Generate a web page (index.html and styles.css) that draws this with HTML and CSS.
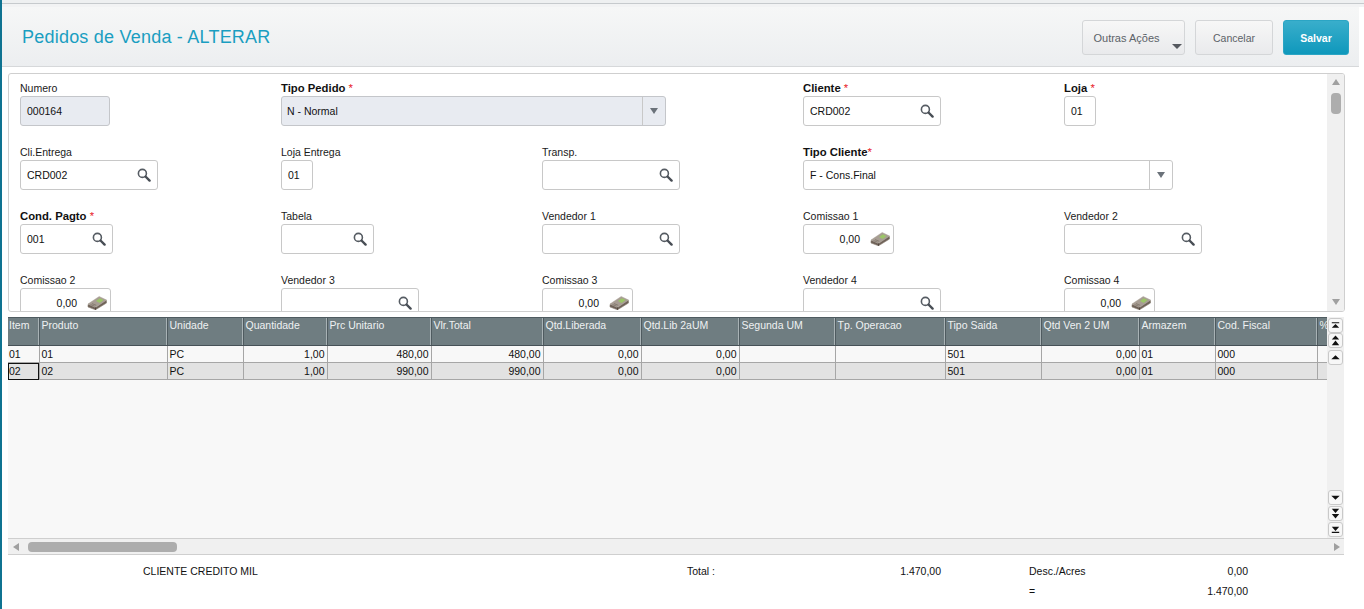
FILE: index.html
```html
<!DOCTYPE html>
<html lang="pt">
<head>
<meta charset="utf-8">
<title>Pedidos de Venda - ALTERAR</title>
<link rel="stylesheet" href="styles.css">
</head>
<body>
<svg class="defs" width="0" height="0" aria-hidden="true">
  <symbol id="lupa" viewBox="0 0 14 14">
    <circle cx="5.4" cy="5.4" r="4" fill="#fff" stroke="#565c63" stroke-width="1.6"/>
    <path d="M8.5 8.5L12.6 12.6" stroke="#484e55" stroke-width="2.4" stroke-linecap="round"/>
  </symbol>
  <symbol id="money" viewBox="0 0 20 15">
    <path d="M1 9.5L12 2.5 19.5 5.5V8L8.5 14.8 1 12Z" fill="#6f6258" stroke="#8a7f74" stroke-width=".6" stroke-linejoin="round"/>
    <path d="M1 9L12.2 1.5 19.5 5 8.5 12.4Z" fill="#a79d93" stroke="#b8b0a7" stroke-width=".6" stroke-linejoin="round"/>
    <path d="M9 6L12.8 3.2 16.6 5 12.8 7.9Z" fill="#9cc568"/>
    <path d="M3.5 9.6L7.6 11.2M5 8.6L9.2 10.3" stroke="#7d7268" stroke-width=".8"/>
    <path d="M8.5 12.4V14.8" stroke="#52483f"/>
  </symbol>
</svg>
<div class="app">
  <div class="topline"></div>
  <header class="head">
    <h1 class="title">Pedidos de Venda - ALTERAR</h1>
    <div class="actions">
      <button class="btn btn-more">Outras Ações<span class="caret"></span></button>
      <button class="btn btn-cancel">Cancelar</button>
      <button class="btn btn-save">Salvar</button>
    </div>
  </header>

  <section class="panel">
    <div class="form">
      <div class="field"><label class="lbl">Numero</label><div class="inp inp-off w90"><span>000164</span></div></div>
      <div class="field span2"><label class="lbl req">Tipo Pedido <i>*</i></label><div class="inp inp-off w385 sel"><span>N - Normal</span><b class="sel-btn"><u></u></b></div></div>
      <div class="field"><label class="lbl req">Cliente <i>*</i></label><div class="inp w138"><span>CRD002</span><svg class="ico"><use href="#lupa"/></svg></div></div>
      <div class="field"><label class="lbl req">Loja <i>*</i></label><div class="inp w32"><span>01</span></div></div>

      <div class="field"><label class="lbl">Cli.Entrega</label><div class="inp w138"><span>CRD002</span><svg class="ico"><use href="#lupa"/></svg></div></div>
      <div class="field"><label class="lbl">Loja Entrega</label><div class="inp w32"><span>01</span></div></div>
      <div class="field"><label class="lbl">Transp.</label><div class="inp w138"><span></span><svg class="ico"><use href="#lupa"/></svg></div></div>
      <div class="field span2"><label class="lbl req">Tipo Cliente<i>*</i></label><div class="inp w370 sel"><span>F - Cons.Final</span><b class="sel-btn"><u></u></b></div></div>

      <div class="field"><label class="lbl req">Cond. Pagto <i>*</i></label><div class="inp w93"><span>001</span><svg class="ico"><use href="#lupa"/></svg></div></div>
      <div class="field"><label class="lbl">Tabela</label><div class="inp w93"><span></span><svg class="ico"><use href="#lupa"/></svg></div></div>
      <div class="field"><label class="lbl">Vendedor 1</label><div class="inp w138"><span></span><svg class="ico"><use href="#lupa"/></svg></div></div>
      <div class="field"><label class="lbl">Comissao 1</label><div class="inp w91 num"><span>0,00</span><svg class="cash"><use href="#money"/></svg></div></div>
      <div class="field"><label class="lbl">Vendedor 2</label><div class="inp w138"><span></span><svg class="ico"><use href="#lupa"/></svg></div></div>

      <div class="field"><label class="lbl">Comissao 2</label><div class="inp w91 num"><span>0,00</span><svg class="cash"><use href="#money"/></svg></div></div>
      <div class="field"><label class="lbl">Vendedor 3</label><div class="inp w138"><span></span><svg class="ico"><use href="#lupa"/></svg></div></div>
      <div class="field"><label class="lbl">Comissao 3</label><div class="inp w91 num"><span>0,00</span><svg class="cash"><use href="#money"/></svg></div></div>
      <div class="field"><label class="lbl">Vendedor 4</label><div class="inp w138"><span></span><svg class="ico"><use href="#lupa"/></svg></div></div>
      <div class="field"><label class="lbl">Comissao 4</label><div class="inp w91 num"><span>0,00</span><svg class="cash"><use href="#money"/></svg></div></div>
    </div>
    <div class="vbar">
      <span class="arr arr-up"></span>
      <span class="vthumb"></span>
      <span class="arr arr-down"></span>
    </div>
  </section>

  <section class="gridwrap">
    <div class="gridarea">
      <table class="grid">
        <colgroup>
          <col class="c31"><col class="c128"><col class="c76"><col class="c84"><col class="c104"><col class="c112"><col class="c98"><col class="c98b"><col class="c96"><col class="c110"><col class="c96b"><col class="c98c"><col class="c76b"><col class="c102"><col class="c10">
        </colgroup>
        <thead>
          <tr><th>Item</th><th>Produto</th><th>Unidade</th><th>Quantidade</th><th>Prc Unitario</th><th>Vlr.Total</th><th>Qtd.Liberada</th><th>Qtd.Lib 2aUM</th><th>Segunda UM</th><th>Tp. Operacao</th><th>Tipo Saida</th><th>Qtd Ven 2 UM</th><th>Armazem</th><th>Cod. Fiscal</th><th>%</th></tr>
        </thead>
        <tbody>
          <tr><td>01</td><td>01</td><td>PC</td><td class="r">1,00</td><td class="r">480,00</td><td class="r">480,00</td><td class="r">0,00</td><td class="r">0,00</td><td></td><td></td><td>501</td><td class="r">0,00</td><td>01</td><td>000</td><td></td></tr>
          <tr class="alt"><td class="cur">02</td><td>02</td><td>PC</td><td class="r">1,00</td><td class="r">990,00</td><td class="r">990,00</td><td class="r">0,00</td><td class="r">0,00</td><td></td><td></td><td>501</td><td class="r">0,00</td><td>01</td><td>000</td><td></td></tr>
        </tbody>
      </table>
    </div>
    <div class="gridbar">
      <div class="stack">
        <button class="sb"><svg viewBox="0 0 14 14"><path d="M3 3.5h8v1.2H3zM7 5.5l4 4H3z"/></svg></button>
        <button class="sb"><svg viewBox="0 0 14 14"><path d="M7 1.5l4 4.5H3zM7 7l4 5H3z"/></svg></button>
        <button class="sb sb-gap"><svg viewBox="0 0 14 14"><path d="M7 4.5l4.5 4.5h-9z"/></svg></button>
      </div>
      <div class="stack">
        <button class="sb"><svg viewBox="0 0 14 14"><path d="M2.5 5h9L7 9.5z"/></svg></button>
        <button class="sb sb-gap"><svg viewBox="0 0 14 14"><path d="M3 2h8L7 6.5zM3 7.5h8L7 12.5z"/></svg></button>
        <button class="sb sb-gap"><svg viewBox="0 0 14 14"><path d="M3 4h8L7 8.5zM3 9.5h8v1.2H3z"/></svg></button>
      </div>
    </div>
  </section>

  <div class="hbar">
    <span class="harr harr-l"></span>
    <span class="hthumb"></span>
    <span class="harr harr-r"></span>
  </div>

  <footer class="totals">
    <span class="t-client">CLIENTE CREDITO MIL</span>
    <span class="t-label">Total :</span>
    <span class="t-total">1.470,00</span>
    <span class="t-desc">Desc./Acres</span>
    <span class="t-val">0,00</span>
    <span class="t-eq">=</span>
    <span class="t-val2">1.470,00</span>
  </footer>
</div>
</body>
</html>
```

FILE: styles.css
```css
* { box-sizing: border-box; }
html, body { margin: 0; height: 100%; background: #fff; overflow: hidden; }
body { font-family: "Liberation Sans", Arial, sans-serif; font-size: 10.5px; color: #1a1a1a; }
.defs { position: absolute; }
.app { height: 609px; border-left: 2px solid #0f7391; display: flex; flex-direction: column; }

.topline { height: 7px; background: #e9ebed; border-top: 3px solid #eef0f1; border-bottom: 3px solid #f2f3f4; box-shadow: inset 0 1px 0 #c6cacd; }

.head { height: 60px; width: 1357px; display: flex; justify-content: space-between; align-items: center; padding: 0 10px 0 20px; background: linear-gradient(#f6f7f7, #eceef0); border-bottom: 1px solid #d6d8da; }
.title { margin: 2px 0 0; font-size: 18px; font-weight: 400; color: #1a9ec1; letter-spacing: .22px; }
.actions { display: flex; gap: 10px; margin-top: 2px; }
.btn { height: 35px; border: 1px solid #d4d6d8; border-radius: 3px; background: linear-gradient(#f7f7f7, #e9eaec); font: 10.5px "Liberation Sans", Arial, sans-serif; color: #5c6268; padding: 0; position: relative; }
.btn-more { width: 103px; padding: 0 14px 0 0; font-size: 11px; }
.btn-cancel { width: 78px; }
.btn-save { width: 66px; background: linear-gradient(#39aecb, #0f98bc); border-color: #2ba5c4; color: #fff; font-weight: 700; }
.caret { position: absolute; right: 2px; bottom: 5px; border: 5px solid transparent; border-top: 5px solid #55595f; border-bottom: 0; width: 0; height: 0; }

.panel { width: 1337px; height: 239px; margin: 6px 0 0 6px; border: 1px solid #cfcfcf; border-radius: 3px; display: flex; overflow: hidden; flex: none; }
.form { flex: 1; min-width: 0; padding: 7px 0 0 11px; display: grid; grid-template-columns: repeat(5, 261px); grid-auto-rows: 64px; }
.span2 { grid-column: span 2; }
.field { display: flex; flex-direction: column; min-width: 0; }
.lbl { height: 15px; line-height: 14px; white-space: nowrap; }
.req { font-weight: 700; font-size: 11.3px; color: #111; }
.req i { color: #e8202a; font-style: normal; font-weight: 400; }
.inp { height: 30px; flex: none; border: 1px solid #c8c8c8; border-radius: 3px; background: #fff; display: flex; align-items: center; padding: 0 6px; position: relative; color: #111; }
.inp > span { flex: 1; }
.inp-off { background: #e8ebf1; border-color: #c4c6ca; }
.inp-off.sel { padding-left: 5px; }
.w32 { width: 32px; } .w90 { width: 90px; } .w91 { width: 91px; } .w93 { width: 93px; } .w138 { width: 138px; } .w370 { width: 370px; } .w385 { width: 385px; }
.ico { width: 14px; height: 14px; margin: 0 0 0 0; flex: none; }
.num > span { text-align: right; padding-right: 10px; }
.cash { width: 20px; height: 15px; flex: none; margin: -2px -3px 0 0; }
.sel { padding-right: 23px; }
.sel-btn { position: absolute; right: 0; top: 0; bottom: 0; width: 23px; border-left: 1px solid #c8c8c8; display: flex; align-items: center; justify-content: center; }
.sel-btn u { border: 4px solid transparent; border-top: 6px solid #6b727a; border-bottom: 0; display: block; width: 0; height: 0; }

.vbar { width: 17px; flex: none; background: #f0f0f0; display: flex; flex-direction: column; align-items: center; }
.arr { width: 0; height: 0; border: 4px solid transparent; flex: none; }
.arr-up { border-bottom: 6px solid #a0a0a0; border-top: 0; margin-top: 5px; }
.vthumb { width: 10px; height: 21px; background: #adadad; border-radius: 4px; margin-top: 8px; }
.arr-down { border-top: 6px solid #a0a0a0; border-bottom: 0; margin-top: auto; margin-bottom: 6px; }

.gridwrap { height: 221px; margin: 5px 0 0 6px; width: 1336px; display: flex; flex: none; }
.gridarea { width: 1319px; background: #f8f8f8; overflow: hidden; flex: none; }
.grid { table-layout: fixed; border-collapse: collapse; width: 1320px; font-size: 10.5px; }
.c31 { width: 31px; } .c128 { width: 128px; } .c76 { width: 76px; } .c84 { width: 84px; } .c104 { width: 104px; } .c112 { width: 112px; } .c98 { width: 98px; } .c98b { width: 98px; } .c96 { width: 96px; } .c110 { width: 110px; } .c96b { width: 96px; } .c98c { width: 98px; } .c76b { width: 76px; } .c102 { width: 102px; } .c10 { width: 11px; }
.grid th { height: 28px; background: #6f7d81; color: #eef1f2; font-weight: 400; text-align: left; vertical-align: top; padding: 1px 0 0 2px; border-top: 1px solid #4f5b60; border-bottom: 1px solid #465157; border-right: 1px solid #4f5b60; box-shadow: inset -1px 0 0 #a8b2b5; white-space: nowrap; overflow: hidden; }
.grid td { height: 17px; padding: 0 0 0 2px; background: #f8f8f8; border-right: 1px solid #a6a6a6; border-bottom: 1px solid #a6a6a6; line-height: 14px; color: #111; overflow: hidden; white-space: nowrap; }
.grid th:first-child, .grid td:first-child { padding-left: 1px; }
.grid .alt td { background: #e2e2e2; }
.grid td.r { text-align: right; padding-right: 2px; }
.grid td.cur { outline: 1px solid #111; outline-offset: -1px; }

.gridbar { width: 17px; background: #f0f0f0; flex: none; display: flex; flex-direction: column; justify-content: space-between; align-items: center; padding: 1px 0 1px; }
.stack { display: flex; flex-direction: column; }
.sb { width: 15px; height: 15px; padding: 0; border: 1px solid #c9c9c9; border-radius: 3px; background: #f7f7f7; display: block; }
.sb svg { display: block; width: 13px; height: 13px; fill: #111; }
.sb-gap { margin-top: 1px; }
.stack:first-child .sb:nth-child(3) { margin-top: 2px; }

.hbar { height: 17px; width: 1336px; margin-left: 6px; background: #f0f0f0; border-top: 1px solid #cfcfcf; border-bottom: 1px solid #cfcfcf; display: flex; align-items: center; flex: none; }
.harr { width: 0; height: 0; border: 4px solid transparent; flex: none; }
.harr-l { border-right: 6px solid #a0a0a0; border-left: 0; margin-left: 5px; }
.hthumb { width: 149px; height: 10px; background: #adadad; border-radius: 4px; margin-left: 9px; }
.harr-r { border-left: 6px solid #a0a0a0; border-right: 0; margin-left: auto; margin-right: 4px; }

.totals { display: grid; grid-template-columns: 141px 544px 254px 88px 219px; grid-template-rows: 20px 20px; padding-top: 8px; color: #111; line-height: 16px; flex: none; }
.t-client { grid-column: 1 / 3; padding-left: 141px; grid-row: 1; }
.t-label { grid-column: 3; grid-row: 1; }
.t-total { grid-column: 3; grid-row: 1; text-align: right; }
.t-desc { grid-column: 5; grid-row: 1; }
.t-val { grid-column: 5; grid-row: 1; text-align: right; }
.t-eq { grid-column: 5; grid-row: 2; }
.t-val2 { grid-column: 5; grid-row: 2; text-align: right; }
```
